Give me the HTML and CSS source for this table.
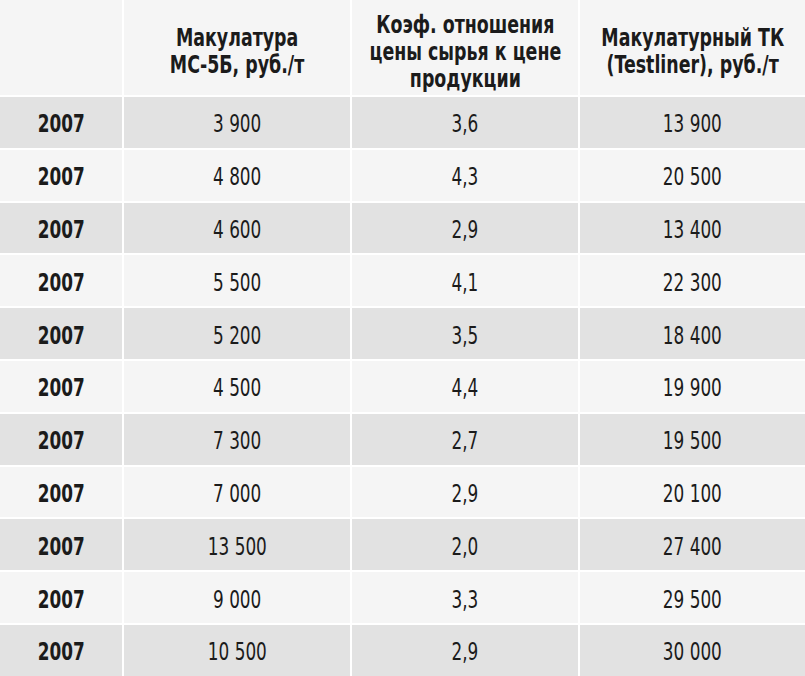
FILE: index.html
```html
<!DOCTYPE html>
<html lang="ru">
<head>
<meta charset="utf-8">
<link rel="stylesheet" href="styles.css">
</head>
<body>
<div class="table">
  <div class="cell head"></div>
  <div class="cell head"><span class="t">Макулатура<br>МС-5Б, руб./т</span></div>
  <div class="cell head"><span class="t">Коэф. отношения<br>цены сырья к цене<br>продукции</span></div>
  <div class="cell head"><span class="t">Макулатурный ТК<br>(Testliner), руб./т</span></div>

  <div class="cell year dark"><span class="t">2007</span></div><div class="cell dark"><span class="t">3 900</span></div><div class="cell dark"><span class="t">3,6</span></div><div class="cell dark"><span class="t">13 900</span></div>
  <div class="cell year"><span class="t">2007</span></div><div class="cell"><span class="t">4 800</span></div><div class="cell"><span class="t">4,3</span></div><div class="cell"><span class="t">20 500</span></div>
  <div class="cell year dark"><span class="t">2007</span></div><div class="cell dark"><span class="t">4 600</span></div><div class="cell dark"><span class="t">2,9</span></div><div class="cell dark"><span class="t">13 400</span></div>
  <div class="cell year"><span class="t">2007</span></div><div class="cell"><span class="t">5 500</span></div><div class="cell"><span class="t">4,1</span></div><div class="cell"><span class="t">22 300</span></div>
  <div class="cell year dark"><span class="t">2007</span></div><div class="cell dark"><span class="t">5 200</span></div><div class="cell dark"><span class="t">3,5</span></div><div class="cell dark"><span class="t">18 400</span></div>
  <div class="cell year"><span class="t">2007</span></div><div class="cell"><span class="t">4 500</span></div><div class="cell"><span class="t">4,4</span></div><div class="cell"><span class="t">19 900</span></div>
  <div class="cell year dark"><span class="t">2007</span></div><div class="cell dark"><span class="t">7 300</span></div><div class="cell dark"><span class="t">2,7</span></div><div class="cell dark"><span class="t">19 500</span></div>
  <div class="cell year"><span class="t">2007</span></div><div class="cell"><span class="t">7 000</span></div><div class="cell"><span class="t">2,9</span></div><div class="cell"><span class="t">20 100</span></div>
  <div class="cell year dark"><span class="t">2007</span></div><div class="cell dark"><span class="t">13 500</span></div><div class="cell dark"><span class="t">2,0</span></div><div class="cell dark"><span class="t">27 400</span></div>
  <div class="cell year"><span class="t">2007</span></div><div class="cell"><span class="t">9 000</span></div><div class="cell"><span class="t">3,3</span></div><div class="cell"><span class="t">29 500</span></div>
  <div class="cell year dark"><span class="t">2007</span></div><div class="cell dark"><span class="t">10 500</span></div><div class="cell dark"><span class="t">2,9</span></div><div class="cell dark"><span class="t">30 000</span></div>
</div>
</body>
</html>
```
FILE: styles.css
```css
html, body {
  margin: 0;
  padding: 0;
  background: #ffffff;
}
.table {
  display: grid;
  grid-template-columns: 122px 226px 226px 1fr;
  grid-template-rows: 95px;
  grid-auto-rows: 50.8px;
  gap: 2px;
  background: #ffffff;
  width: 805px;
  font-family: "DejaVu Sans Condensed", "DejaVu Sans", sans-serif;
  color: #1b1b1b;
}
.cell {
  background: #f5f5f5;
  display: flex;
  align-items: center;
  justify-content: center;
  text-align: center;
  font-size: 25px;
  padding-top: 3px;
  box-sizing: border-box;
  white-space: nowrap;
  min-width: 0;
}
.t {
  display: inline-block;
  transform: scaleX(0.75);
  transform-origin: center center;
}
.dark {
  background: #e2e2e2;
}
.head {
  font-weight: bold;
  font-size: 24.5px;
  line-height: 27px;
  padding-top: 7px;
}
.head .t {
  transform: scaleX(0.79);
}
.year {
  font-weight: bold;
}
```
